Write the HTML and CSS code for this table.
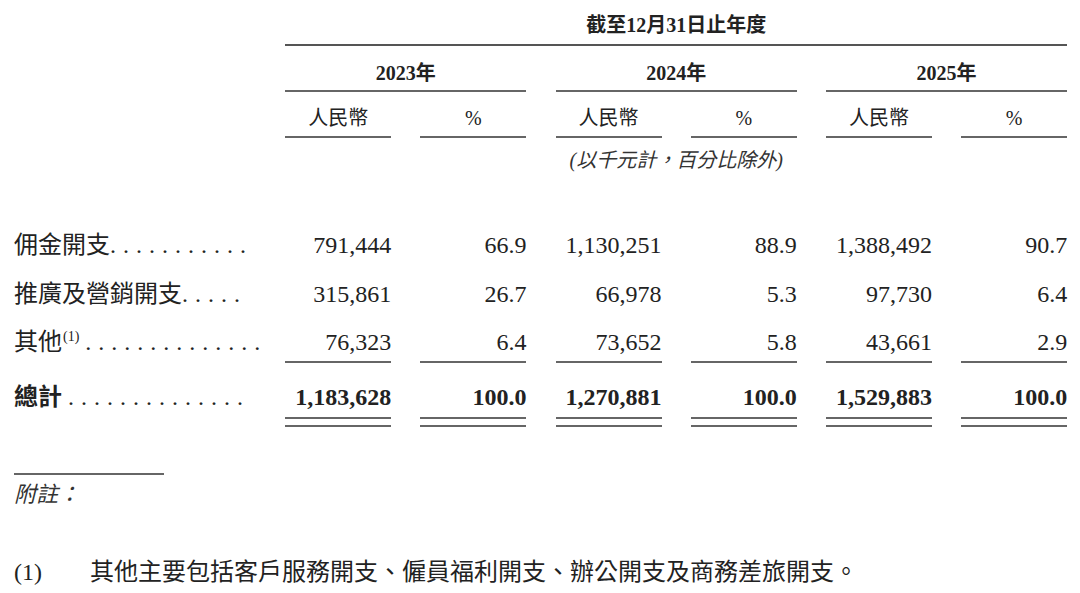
FILE: index.html
```html
<!DOCTYPE html>
<html lang="zh-Hant">
<head>
<meta charset="utf-8">
<title>開支明細</title>
<link rel="stylesheet" href="styles.css">
</head>
<body>
<div class="page">
  <div class="fin-table">
    <div class="hrow">
      <div class="period">截至12月31日止年度</div>
    </div>
    <div class="hrow">
      <div class="year g1">2023年</div>
      <div class="year g2">2024年</div>
      <div class="year g3">2025年</div>
    </div>
    <div class="hrow">
      <div class="sub first">人民幣</div>
      <div class="sub">%</div>
      <div class="sub">人民幣</div>
      <div class="sub">%</div>
      <div class="sub">人民幣</div>
      <div class="sub">%</div>
    </div>
    <div class="hrow">
      <div class="unit-note">(以千元計，百分比除外)</div>
    </div>

    <div class="row">
      <div class="label">佣金開支<span class="dots">...........</span></div>
      <div class="val">791,444</div>
      <div class="val">66.9</div>
      <div class="val">1,130,251</div>
      <div class="val">88.9</div>
      <div class="val">1,388,492</div>
      <div class="val">90.7</div>
    </div>
    <div class="row">
      <div class="label">推廣及營銷開支<span class="dots">.....</span></div>
      <div class="val">315,861</div>
      <div class="val">26.7</div>
      <div class="val">66,978</div>
      <div class="val">5.3</div>
      <div class="val">97,730</div>
      <div class="val">6.4</div>
    </div>
    <div class="row last">
      <div class="label">其他<sup class="fn-ref">(1)</sup> <span class="dots">..............</span></div>
      <div class="val">76,323</div>
      <div class="val">6.4</div>
      <div class="val">73,652</div>
      <div class="val">5.8</div>
      <div class="val">43,661</div>
      <div class="val">2.9</div>
    </div>
    <div class="row total">
      <div class="label">總計 <span class="dots">..............</span></div>
      <div class="val">1,183,628</div>
      <div class="val">100.0</div>
      <div class="val">1,270,881</div>
      <div class="val">100.0</div>
      <div class="val">1,529,883</div>
      <div class="val">100.0</div>
    </div>
  </div>

  <div class="fn-rule"></div>
  <div class="fn-title">附註：</div>
  <div class="fn-item">
    <span class="fn-num">(1)</span>
    <span class="fn-text">其他主要包括客戶服務開支、僱員福利開支、辦公開支及商務差旅開支。</span>
  </div>
</div>
</body>
</html>
```

FILE: styles.css
```css
html, body {
  margin: 0;
  padding: 0;
  background: #ffffff;
}

body {
  color: #222222;
  font-family: "Liberation Serif", "Noto Sans CJK TC", serif;
}

.page {
  padding: 0 0 0 14px;
  width: 1066px;
}

.fin-table {
  display: grid;
  grid-template-columns: 242px repeat(6, 106px);
  column-gap: 29.2px;
}

.hrow,
.row {
  display: contents;
}

.period {
  grid-column: 2 / 8;
  text-align: center;
  font-weight: 700;
  font-size: 20px;
  line-height: 26px;
  padding: 12px 0 6px;
  border-bottom: 2px solid #555555;
}

.year {
  text-align: center;
  font-weight: 700;
  font-size: 20px;
  line-height: 26px;
  padding: 14px 0 4px;
  border-bottom: 2px solid #666666;
}

.year.g1 { grid-column: 2 / 4; }
.year.g2 { grid-column: 4 / 6; }
.year.g3 { grid-column: 6 / 8; }

.sub {
  text-align: center;
  font-size: 20px;
  line-height: 26px;
  padding: 13px 0 5px;
  border-bottom: 2px solid #666666;
}

.sub.first {
  grid-column: 2;
}

.unit-note {
  grid-column: 4 / 6;
  text-align: center;
  font-style: italic;
  font-size: 20px;
  line-height: 26px;
  padding: 9px 0 48px;
  color: #333333;
}

.label,
.val {
  font-size: 24px;
  line-height: 30px;
  padding: 9px 0 9.5px;
  white-space: nowrap;
}

.label {
  grid-column: 1;
}

.val {
  text-align: right;
}

.dots {
  letter-spacing: 7px;
  font-weight: 400;
}

.fn-ref {
  font-size: 14px;
  line-height: 0;
  vertical-align: 9px;
  margin-left: 1px;
}

.row.last .label,
.row.last .val {
  padding: 9px 0 4px;
}

.row.last .val {
  border-bottom: 2px solid #666666;
}

.row.total .label,
.row.total .val {
  font-weight: 700;
  padding: 19px 0 13px;
}

.row.total .val {
  border-bottom: 2px solid #666666;
  background-image: linear-gradient(#666666, #666666);
  background-repeat: no-repeat;
  background-size: 100% 2px;
  background-position: 0 calc(100% - 6px);
}

.fn-rule {
  margin-top: 46px;
  width: 150px;
  height: 2px;
  background: #666666;
}

.fn-title {
  margin-top: 5px;
  font-size: 22px;
  line-height: 30px;
  font-style: italic;
  color: #333333;
}

.fn-item {
  display: flex;
  margin-top: 47px;
  font-size: 24px;
  line-height: 30px;
}

.fn-num {
  width: 76px;
  flex: none;
}
```
